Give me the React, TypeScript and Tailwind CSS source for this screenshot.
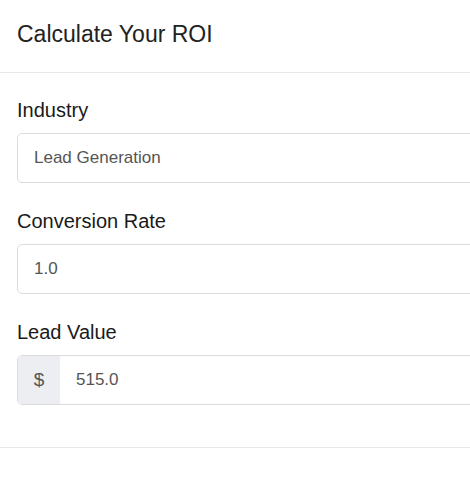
import React from "react";

function Field({
  label,
  value,
  prefix,
}: {
  label: string;
  value: string;
  prefix?: string;
}) {
  return (
    <div className="flex flex-col">
      <label className="text-[20px] leading-[24px] text-[#1a1a1a] mb-[11px]">
        {label}
      </label>
      <div className="flex h-[50px] rounded-[5px] border border-[#dcdcdc] overflow-hidden bg-white">
        {prefix && (
          <span className="w-[42px] flex items-center justify-center bg-[#eceef1] text-[#555] text-[19px]">
            {prefix}
          </span>
        )}
        <input
          readOnly
          value={value}
          className="flex-1 px-4 text-[17px] text-[#555] bg-transparent outline-none"
        />
      </div>
    </div>
  );
}

export default function App() {
  return (
    <div
      className="w-[470px] h-[482px] overflow-hidden bg-white"
      style={{ fontFamily: '"Liberation Sans", Arial, sans-serif' }}
    >
      <div className="w-[540px]">
        <div className="px-[17px] pt-[20px] pb-[24px] border-b border-[#e8e8e8]">
          <h2 className="text-[23px] leading-[28px] text-[#222]">
            Calculate Your ROI
          </h2>
        </div>
        <div className="px-[17px] pt-[25px] pb-[42px] flex flex-col gap-[26px] border-b border-[#e8e8e8]">
          <Field label="Industry" value="Lead Generation" />
          <Field label="Conversion Rate" value="1.0" />
          <Field label="Lead Value" value="515.0" prefix="$" />
        </div>
      </div>
    </div>
  );
}
